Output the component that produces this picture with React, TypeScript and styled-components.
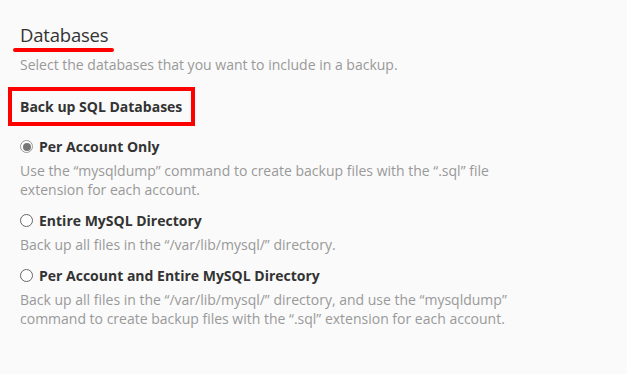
import styled, { createGlobalStyle } from 'styled-components';

const GlobalStyle = createGlobalStyle`
  html, body {
    margin: 0;
    padding: 0;
    background: #fafafa;
  }
  body {
    font-family: 'Open Sans', 'Liberation Sans', sans-serif;
    color: #333;
  }
`;

const Page = styled.div`
  width: 627px;
  height: 374px;
  padding: 23px 20px 0 20px;
  box-sizing: border-box;
  background: #fafafa;
`;

const Heading = styled.h2`
  position: relative;
  display: inline-block;
  margin: 0;
  font-size: 18.5px;
  font-weight: 400;
  line-height: 24px;
  letter-spacing: -0.2px;
  color: #333;

  &::after {
    content: '';
    position: absolute;
    left: -7px;
    right: -6px;
    bottom: -5px;
    height: 4px;
    border-radius: 2px;
    background: #ff0000;
  }
`;

const Intro = styled.p`
  margin: 8px 0 0;
  font-size: 14px;
  line-height: 19px;
  color: #999;
`;

const TitleRow = styled.div`
  margin: 13px 0 0 -12px;
`;

const GroupTitle = styled.span`
  display: inline-block;
  padding: 6px 9px 6px 8px;
  border: 4px solid #ff0000;
  font-size: 14px;
  font-weight: 700;
  line-height: 19px;
  white-space: nowrap;
  color: #333;
`;

const Options = styled.div`
  display: flex;
  flex-direction: column;
  gap: 12px;
  margin-top: 11px;
`;

const Option = styled.label`
  display: flex;
  flex-direction: column;
  gap: 5px;
`;

const OptionHead = styled.span`
  display: flex;
  align-items: center;
  gap: 6px;
  font-size: 14px;
  font-weight: 700;
  line-height: 19px;
  color: #333;
`;

const Radio = styled.span<{ $checked?: boolean }>`
  width: 13px;
  height: 13px;
  box-sizing: border-box;
  border-radius: 50%;
  border: 1px solid ${(p) => (p.$checked ? '#999' : '#666')};
  background: #fff;
  display: flex;
  align-items: center;
  justify-content: center;

  &::after {
    content: '';
    width: 8px;
    height: 8px;
    border-radius: 50%;
    background: ${(p) => (p.$checked ? '#777' : 'transparent')};
  }
`;

const Desc = styled.span`
  display: block;
  max-width: 500px;
  font-size: 14px;
  line-height: 19px;
  color: #999;
`;

const options = [
  {
    label: 'Per Account Only',
    desc: 'Use the \u201cmysqldump\u201d command to create backup files with the \u201c.sql\u201d file extension for each account.',
    checked: true,
  },
  {
    label: 'Entire MySQL Directory',
    desc: 'Back up all files in the \u201c/var/lib/mysql/\u201d directory.',
    checked: false,
  },
  {
    label: 'Per Account and Entire MySQL Directory',
    desc: 'Back up all files in the \u201c/var/lib/mysql/\u201d directory, and use the \u201cmysqldump\u201d command to create backup files with the \u201c.sql\u201d extension for each account.',
    checked: false,
  },
];

const App = () => {
  return (
    <Page>
      <GlobalStyle />
      <Heading>Databases</Heading>
      <Intro>Select the databases that you want to include in a backup.</Intro>
      <TitleRow>
        <GroupTitle>Back up SQL Databases</GroupTitle>
      </TitleRow>
      <Options>
        {options.map(({ label, desc, checked }, idx) => (
          <Option key={idx}>
            <OptionHead>
              <Radio $checked={checked} />
              {label}
            </OptionHead>
            <Desc>{desc}</Desc>
          </Option>
        ))}
      </Options>
    </Page>
  );
};

export default App;
